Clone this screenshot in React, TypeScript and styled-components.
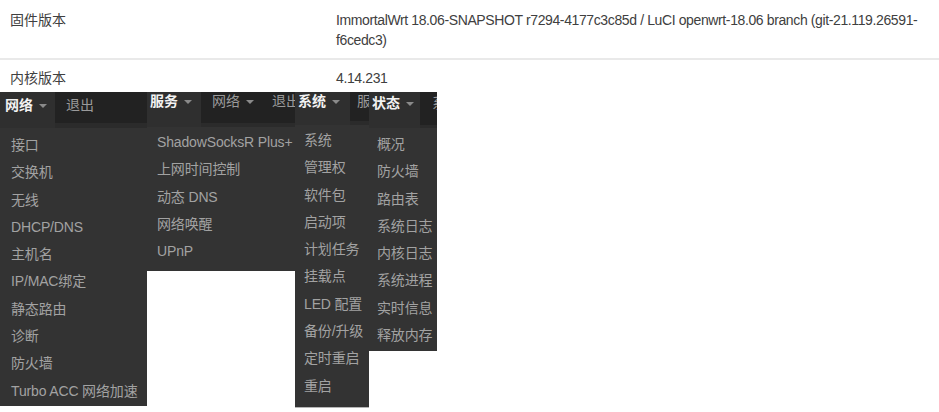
import React from "react";
import styled, { createGlobalStyle } from "styled-components";

const Global = createGlobalStyle`
  html, body { margin: 0; padding: 0; background: #fff; }
  body {
    font-family: "Liberation Sans", Arial, "Noto Sans CJK SC", sans-serif;
    font-size: 14px;
    color: #333;
  }
  ul { margin: 0; padding: 0; list-style: none; }
`;

const Page = styled.div`
  width: 939px;
  height: 412px;
  overflow: hidden;
`;

const InfoTable = styled.div`
  display: flex;
  flex-direction: column;
`;

const InfoRow = styled.div<{ $top: number; $bottom: number; $divider?: boolean }>`
  display: grid;
  grid-template-columns: 336px 1fr;
  padding: ${(p) => p.$top}px 3px ${(p) => p.$bottom}px 0;
  line-height: 20px;
  border-top: ${(p) => (p.$divider ? "2px solid #e9e9e9" : "none")};
`;

const Label = styled.div`
  padding-left: 10px;
  color: #404040;
`;

const Value = styled.div`
  color: #404040;
  letter-spacing: -0.38px;
`;

const MenuStrip = styled.div`
  display: flex;
  align-items: flex-start;
`;

const Panel = styled.div<{ $w: number; $h: number; $edge?: boolean }>`
  width: ${(p) => p.$w}px;
  height: ${(p) => p.$h}px;
  flex: none;
  overflow: hidden;
  background: #333;
  display: flex;
  flex-direction: column;
  border-bottom: ${(p) => (p.$edge ? "1px solid #b5b5b5" : "none")};
`;

const NavBar = styled.div<{ $h: number }>`
  height: ${(p) => p.$h}px;
  flex: none;
  display: flex;
  align-items: flex-start;
  background: #2b2b2b;
  white-space: nowrap;
  overflow: hidden;
`;

const Tab = styled.div<{ $w: number; $pad: number; $top: number; $h: number; $active?: boolean }>`
  flex: none;
  width: ${(p) => p.$w}px;
  height: ${(p) => p.$h}px;
  box-sizing: border-box;
  padding: ${(p) => p.$top}px 0 0 ${(p) => p.$pad}px;
  background: ${(p) => (p.$active ? "#2f2f2f" : "#222")};
  color: ${(p) => (p.$active ? "#f2f2f2" : "#9a9a9a")};
  font-weight: ${(p) => (p.$active ? 700 : 400)};
  line-height: 18px;
  display: flex;
  align-items: flex-start;
  overflow: hidden;
`;

const Caret = styled.span`
  display: inline-block;
  width: 0;
  height: 0;
  margin: 8px 0 0 6px;
  border-top: 4px solid #8a8a8a;
  border-left: 4px solid transparent;
  border-right: 4px solid transparent;
`;

const MenuList = styled.ul<{ $top: number; $indent: number }>`
  padding: ${(p) => p.$top}px 0 0 ${(p) => p.$indent}px !important;
  white-space: nowrap;
`;

const MenuItem = styled.li`
  line-height: 27.3px;
  height: 27.3px;
  color: #a2a2a2;
  font-size: 14px;
  letter-spacing: -0.15px;
`;

type TabDef = { label: string; w: number; pad: number; active?: boolean; caret?: boolean; h: number };
type PanelDef = {
  w: number;
  h: number;
  nav: number;
  textTop: number;
  listTop: number;
  indent: number;
  edge?: boolean;
  tabs: TabDef[];
  items: string[];
};

const panels: PanelDef[] = [
  {
    w: 147, h: 314, nav: 36, textTop: 4, listTop: 4, indent: 11,
    tabs: [
      { label: "网络", w: 55, pad: 5, active: true, caret: true, h: 36 },
      { label: "退出", w: 92, pad: 11, h: 31 },
    ],
    items: ["接口", "交换机", "无线", "DHCP/DNS", "主机名", "IP/MAC绑定", "静态路由", "诊断", "防火墙", "Turbo ACC 网络加速"],
  },
  {
    w: 148, h: 179, nav: 35, textTop: 0, listTop: 2, indent: 10,
    tabs: [
      { label: "服务", w: 54, pad: 3, active: true, caret: true, h: 35 },
      { label: "网络", w: 60, pad: 11, caret: true, h: 31 },
      { label: "退出", w: 60, pad: 11, h: 31 },
    ],
    items: ["ShadowSocksR Plus+", "上网时间控制", "动态 DNS", "网络唤醒", "UPnP"],
  },
  {
    w: 74, h: 315, nav: 33, textTop: 0, listTop: 2, indent: 9, edge: true,
    tabs: [
      { label: "系统", w: 55, pad: 3, active: true, caret: true, h: 33 },
      { label: "服务", w: 40, pad: 7, h: 29 },
    ],
    items: ["系统", "管理权", "软件包", "启动项", "计划任务", "挂载点", "LED 配置", "备份/升级", "定时重启", "重启"],
  },
  {
    w: 68, h: 259, nav: 36, textTop: 2, listTop: 3, indent: 8,
    tabs: [
      { label: "状态", w: 51, pad: 3, active: true, caret: true, h: 36 },
      { label: "系统", w: 40, pad: 12, h: 33 },
    ],
    items: ["概况", "防火墙", "路由表", "系统日志", "内核日志", "系统进程", "实时信息", "释放内存"],
  },
];

export default function App() {
  return (
    <Page>
      <Global />
      <InfoTable>
        <InfoRow $top={10} $bottom={8}>
          <Label>固件版本</Label>
          <Value>
            ImmortalWrt 18.06-SNAPSHOT r7294-4177c3c85d / LuCI openwrt-18.06 branch (git-21.119.26591-f6cedc3)
          </Value>
        </InfoRow>
        <InfoRow $top={8} $bottom={4} $divider>
          <Label>内核版本</Label>
          <Value>4.14.231</Value>
        </InfoRow>
      </InfoTable>
      <MenuStrip>
        {panels.map((p, i) => (
          <Panel key={i} $w={p.w} $h={p.h} $edge={p.edge}>
            <NavBar $h={p.nav}>
              {p.tabs.map((t, j) => (
                <Tab key={j} $w={t.w} $pad={t.pad} $top={p.textTop} $h={t.h} $active={t.active}>
                  {t.label}
                  {t.caret && <Caret />}
                </Tab>
              ))}
            </NavBar>
            <MenuList $top={p.listTop} $indent={p.indent}>
              {p.items.map((it) => (
                <MenuItem key={it}>{it}</MenuItem>
              ))}
            </MenuList>
          </Panel>
        ))}
      </MenuStrip>
    </Page>
  );
}
